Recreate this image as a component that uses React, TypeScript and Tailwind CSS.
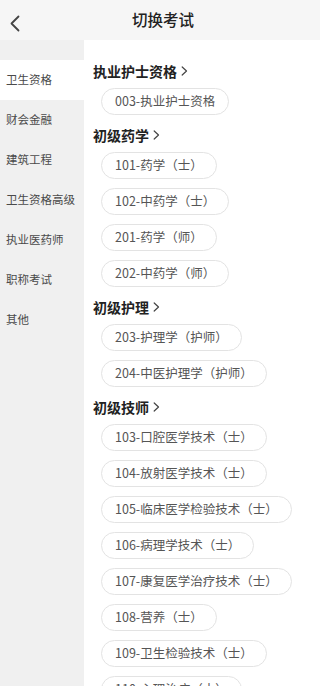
import React, { useState } from 'react';

const FONT = { fontFamily: '"Noto Sans CJK SC", "Noto Sans", sans-serif' };

const sideItems = ['卫生资格', '财会金融', '建筑工程', '卫生资格高级', '执业医药师', '职称考试', '其他'];

const groups = [
    { title: '执业护士资格', items: ['003-执业护士资格'] },
    { title: '初级药学', items: ['101-药学（士）', '102-中药学（士）', '201-药学（师）', '202-中药学（师）'] },
    { title: '初级护理', items: ['203-护理学（护师）', '204-中医护理学（护师）'] },
    {
        title: '初级技师',
        items: [
            '103-口腔医学技术（士）',
            '104-放射医学技术（士）',
            '105-临床医学检验技术（士）',
            '106-病理学技术（士）',
            '107-康复医学治疗技术（士）',
            '108-营养（士）',
            '109-卫生检验技术（士）',
            '110-心理治疗（士）',
        ],
    },
];

export default function App() {
    const [active, setActive] = useState(0);

    return (
        <div className="w-[320px] h-[686px] overflow-hidden flex flex-col bg-white" style={FONT}>
            {/* header */}
            <div className="h-[40px] shrink-0 bg-[#f6f6f6] flex items-center relative">
                <button className="absolute left-[7px] top-[14px] w-[14px] h-[18px] flex items-center justify-center">
                    <svg width="11" height="17" viewBox="0 0 11 17" fill="none">
                        <path d="M9.5 1.5L2.5 8.5L9.5 15.5" stroke="#444" strokeWidth="1.8" strokeLinecap="round" strokeLinejoin="round" />
                    </svg>
                </button>
                <div className="flex-1 text-center text-[15.5px] font-medium text-[#222] pl-[6px]">切换考试</div>
            </div>

            <div className="flex-1 flex min-h-0">
                {/* sidebar */}
                <div className="w-[84px] shrink-0 bg-[#f0f0f0] pt-[20px]">
                    {sideItems.map((s, i) => (
                        <div
                            key={s}
                            onClick={() => setActive(i)}
                            className={
                                'h-[40px] flex items-center pl-[6px] text-[11.5px] text-[#4a4a4a] ' +
                                (i === active ? 'bg-white' : '')
                            }
                        >
                            {s}
                        </div>
                    ))}
                </div>

                {/* list */}
                <div className="flex-1 bg-white pl-[9px] pt-[23px]">
                    {groups.map((g, gi) => (
                        <div key={g.title} className={gi > 0 ? 'mt-[12px]' : ''}>
                            <div className="h-[16px] flex items-center gap-[4px] text-[14px] font-bold text-[#222] leading-none">
                                <span>{g.title}</span>
                                <svg width="7" height="10" viewBox="0 0 7 10" fill="none">
                                    <path d="M1.2 1L5.5 5L1.2 9" stroke="#444" strokeWidth="1.2" strokeLinecap="round" strokeLinejoin="round" />
                                </svg>
                            </div>
                            <div className="mt-[9px] ml-[8px] flex flex-col items-start gap-[9px]">
                                {g.items.map((it) => (
                                    <div
                                        key={it}
                                        className="h-[27px] flex items-center px-[13px] rounded-full border border-[#e3e3e3] text-[12.5px] text-[#555] whitespace-nowrap"
                                    >
                                        {it}
                                    </div>
                                ))}
                            </div>
                        </div>
                    ))}
                </div>
            </div>
        </div>
    );
}
